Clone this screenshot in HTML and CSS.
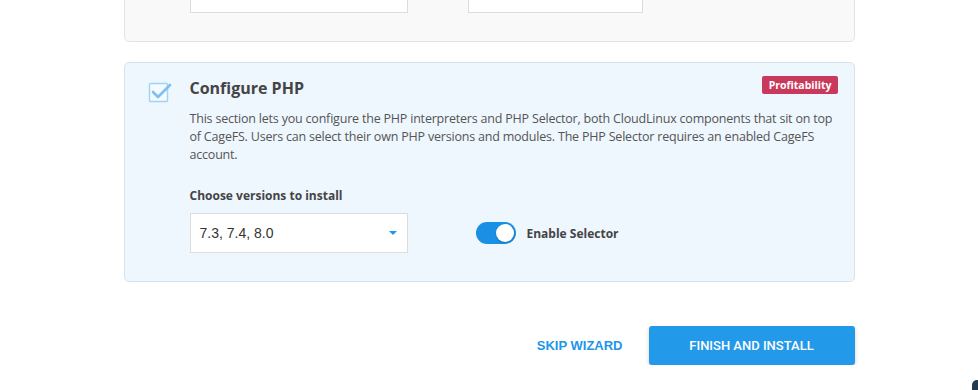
FILE: index.html
```html
<!DOCTYPE html>
<html lang="en">

<head>
    <meta charset="UTF-8">
    <meta name="viewport" content="width=device-width, initial-scale=1.0">
    <title>Setup Wizard</title>
    <link rel="stylesheet" href="styles.css">
</head>

<body>
    <div class="wizard">
        <!-- previous step, scrolled mostly out of view -->
        <div class="card card-muted">
            <div class="field-row">
                <div class="fake-input wide"></div>
                <div class="fake-input narrow"></div>
            </div>
        </div>

        <!-- PHP step -->
        <div class="card card-active">
            <div class="card-check">
                <svg width="26" height="24" viewBox="0 0 26 24">
                    <rect x="1.5" y="4.5" width="18" height="18" rx="1" fill="#f4faff" stroke="#9fd3f7" stroke-width="1.4"/>
                    <path d="M5 13 L10 18 L22 6" fill="none" stroke="#7cc1f0" stroke-width="2.6" stroke-linecap="round" stroke-linejoin="round"/>
                </svg>
            </div>
            <div class="card-body">
                <div class="card-head">
                    <h2>Configure PHP</h2>
                    <span class="badge">Profitability</span>
                </div>
                <p>This section lets you configure the PHP interpreters and PHP Selector, both CloudLinux components that sit on top of CageFS. Users can select their own PHP versions and modules. The PHP Selector requires an enabled CageFS account.</p>

                <label class="field-label">Choose versions to install</label>
                <div class="controls">
                    <div class="select">
                        <span>7.3, 7.4, 8.0</span>
                        <span class="caret"></span>
                    </div>
                    <div class="toggle-wrap">
                        <span class="toggle on"><span class="knob"></span></span>
                        <span class="toggle-label">Enable Selector</span>
                    </div>
                </div>
            </div>
        </div>

        <div class="actions">
            <button type="button" class="btn-link">SKIP WIZARD</button>
            <button type="button" class="btn-primary">FINISH AND INSTALL</button>
        </div>
    </div>

    <div class="chat-bubble"></div>
</body>

</html>
```

FILE: styles.css
```css
body {
    margin: 0;
    background-color: #ffffff;
    font-family: "Open Sans", sans-serif;
    color: #555;
    overflow: hidden;
}

.wizard {
    width: 731px;
    margin: -48px auto 0;
}

.card {
    border: 1px solid #dfe2e6;
    border-radius: 5px;
    box-sizing: border-box;
}

.card-muted {
    background: #f9f9f9;
    border-color: #e3e3e3;
    padding: 20px 20px 28px 65px;
}

.field-row {
    display: flex;
    gap: 60px;
}

.fake-input {
    height: 40px;
    background: #fff;
    border: 1px solid #dcdcdc;
    box-sizing: border-box;
}

.fake-input.wide {
    width: 218px;
}

.fake-input.narrow {
    width: 175px;
}

.card-active {
    margin-top: 20px;
    background: #eef6fe;
    border-color: #dae2ea;
    display: flex;
    padding: 14px 16px 28px 23px;
}

.card-check {
    width: 42px;
    flex-shrink: 0;
    padding-top: 2px;
}

.card-body {
    flex: 1;
}

.card-head {
    display: flex;
    justify-content: space-between;
    align-items: flex-start;
}

.card-head h2 {
    margin: 0;
    font-size: 16px;
    line-height: 22px;
    font-weight: 700;
    color: #444;
}

.badge {
    margin-top: -1px;
    background: #c9395b;
    color: #fff;
    font-size: 10.5px;
    font-weight: 700;
    line-height: 18px;
    padding: 0 6px 0 7px;
    border-radius: 2px;
}

.card-body p {
    margin: 11px 0 0;
    font-size: 12.5px;
    line-height: 18px;
    letter-spacing: -0.2px;
    color: #555;
    padding-right: 4px;
}

.field-label {
    display: block;
    margin-top: 23px;
    font-size: 12px;
    line-height: 18px;
    font-weight: 700;
    color: #444;
}

.controls {
    margin-top: 8px;
    display: flex;
    align-items: center;
    gap: 68px;
}

.select {
    width: 218px;
    height: 40px;
    box-sizing: border-box;
    background: #fff;
    border: 1px solid #dcdcdc;
    display: flex;
    align-items: center;
    justify-content: space-between;
    padding: 0 10px 0 9px;
    font-family: "Liberation Sans", Arial, sans-serif;
    font-size: 14px;
    color: #333;
}

.caret {
    width: 0;
    height: 0;
    border-left: 4px solid transparent;
    border-right: 4px solid transparent;
    border-top: 4px solid #2196e9;
}

.toggle-wrap {
    display: flex;
    align-items: center;
    gap: 11px;
}

.toggle {
    position: relative;
    width: 40px;
    height: 22px;
    border-radius: 11px;
    background: #d0d0d0;
}

.toggle.on {
    background: #1b8fe3;
}

.toggle .knob {
    position: absolute;
    top: 2px;
    left: 2px;
    width: 18px;
    height: 18px;
    border-radius: 50%;
    background: #fff;
    box-shadow: 0 1px 2px rgba(0, 0, 0, 0.2);
}

.toggle.on .knob {
    left: 20px;
}

.toggle-label {
    font-size: 12px;
    font-weight: 700;
    color: #444;
}

.actions {
    margin-top: 44px;
    display: flex;
    justify-content: flex-end;
    align-items: center;
    gap: 12px;
}

.btn-link {
    background: none;
    border: none;
    padding: 0 14px;
    color: #2196e9;
    font-family: "Liberation Sans", Arial, sans-serif;
    font-weight: 700;
    font-size: 13px;
    cursor: pointer;
}

.btn-primary {
    width: 206px;
    height: 39px;
    background: #2399e9;
    color: #fff;
    border: none;
    border-radius: 3px;
    font-family: Roboto, sans-serif;
    font-weight: 500;
    font-size: 13px;
    box-shadow: 0 2px 4px rgba(0, 0, 0, 0.18);
    cursor: pointer;
}

.chat-bubble {
    position: fixed;
    right: -34px;
    bottom: -30px;
    width: 40px;
    height: 40px;
    border-radius: 5px;
    background: #243b4f;
}
```
